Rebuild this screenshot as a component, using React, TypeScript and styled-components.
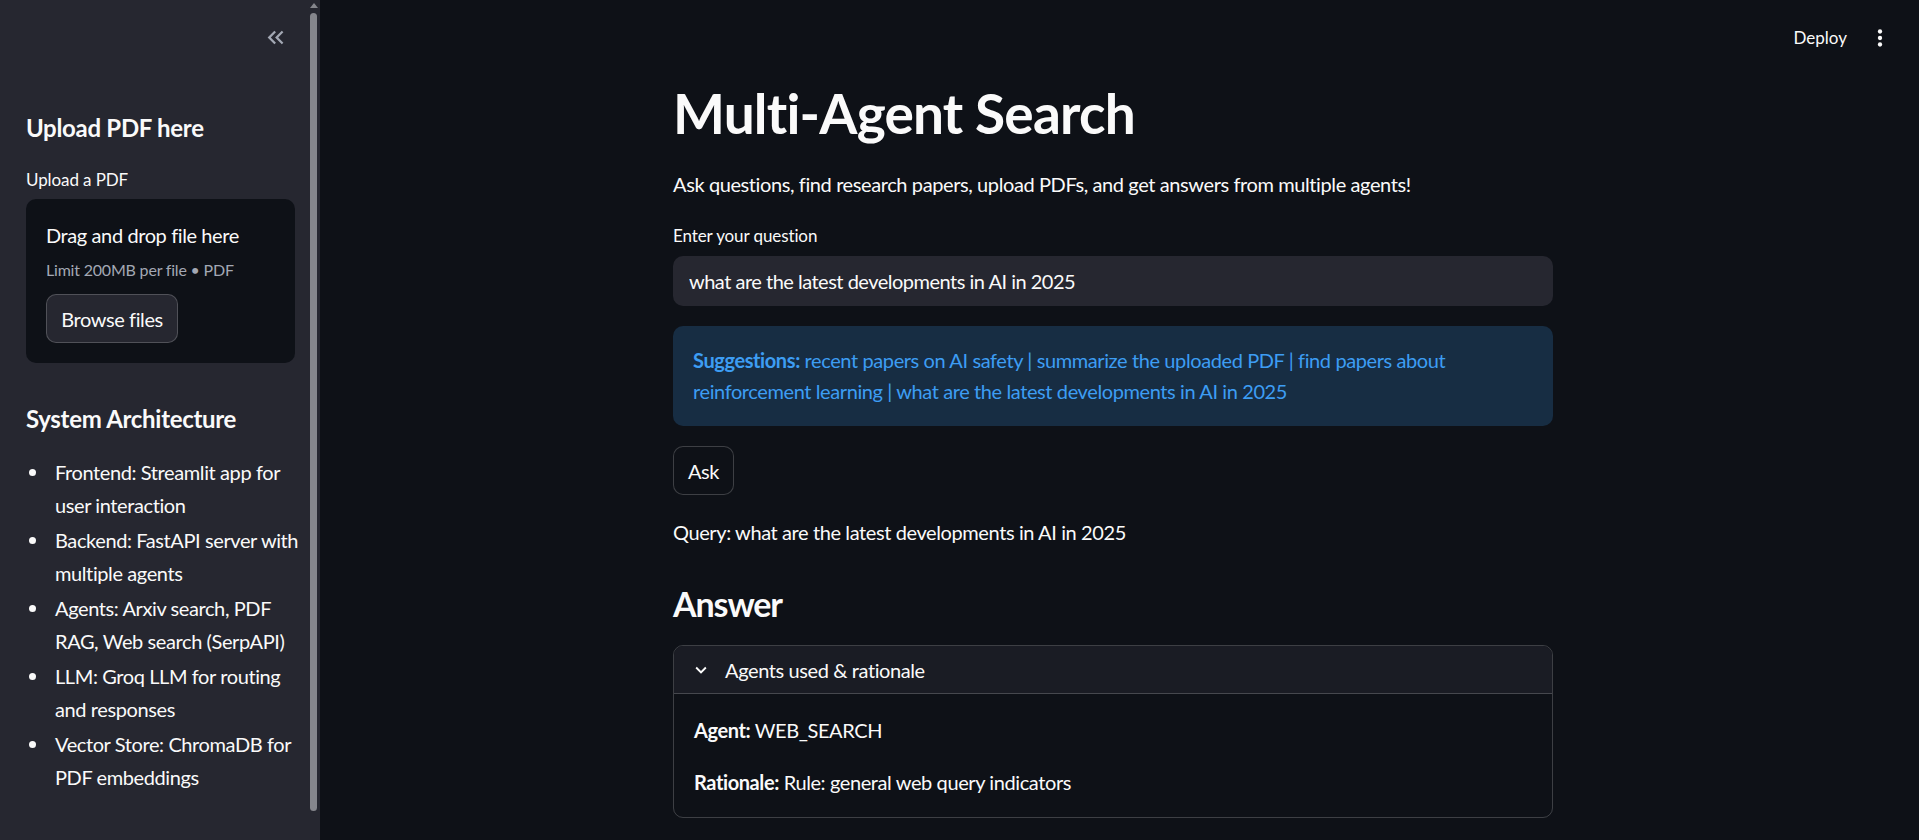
import React from "react";
import styled, { createGlobalStyle } from "styled-components";

const FONT = `Lato, "Noto Sans", "DejaVu Sans", sans-serif`;

const GlobalStyle = createGlobalStyle`
  html, body { margin: 0; padding: 0; }
  body {
    background: #0e1117;
    color: #fafafa;
    font-family: ${FONT};
    font-size: 20px;
    letter-spacing: -0.4px;
    -webkit-font-smoothing: antialiased;
  }
  * { box-sizing: border-box; }
`;

const Shell = styled.div`
  display: flex;
  height: 840px;
  overflow: hidden;
  background: #0e1117;
`;

/* ---------------- Sidebar ---------------- */

const Sidebar = styled.aside`
  position: relative;
  width: 320px;
  flex: 0 0 320px;
  height: 100%;
  background: #262730;
  padding: 0 25px 0 26px;
`;

const SidebarTop = styled.div`
  height: 75px;
  display: flex;
  justify-content: flex-end;
  align-items: center;
  padding-right: 6px;
`;

const IconButton = styled.button<{ $tone?: string }>`
  display: flex;
  align-items: center;
  justify-content: center;
  background: none;
  border: 0;
  padding: 0;
  margin: 0;
  color: ${(p) => p.$tone || "#fafafa"};
  cursor: pointer;
`;

const ScrollTrack = styled.div`
  position: absolute;
  top: 0;
  right: 2px;
  width: 8px;
  height: 100%;
`;

const ScrollArrow = styled.div`
  width: 0;
  height: 0;
  margin: 3px auto 0;
  border-left: 4px solid transparent;
  border-right: 4px solid transparent;
  border-bottom: 5px solid #85868c;
`;

const ScrollThumb = styled.div`
  position: absolute;
  left: 0;
  top: 13px;
  width: 7px;
  height: 798px;
  border-radius: 4px;
  background: #85868c;
`;

const SideHeading = styled.h3<{ $mt: number }>`
  margin: ${(p) => p.$mt}px 0 0;
  font-size: 24px;
  line-height: 30px;
  font-weight: 700;
  letter-spacing: -0.3px;
  color: #fafafa;
`;

const FieldLabel = styled.label<{ $mt: number }>`
  display: block;
  font-size: 17px;
  line-height: 24px;
  letter-spacing: -0.1px;
  color: #fafafa;
  margin-top: ${(p) => p.$mt}px;
`;

const Dropzone = styled.section`
  margin-top: 7px;
  background: #0e1117;
  border-radius: 10px;
  padding: 22px 20px 20px;
  display: flex;
  flex-direction: column;
  align-items: flex-start;
`;

const DropTitle = styled.div`
  font-size: 20px;
  line-height: 28px;
  color: #fafafa;
`;

const DropHint = styled.div`
  margin-top: 9px;
  font-size: 16px;
  line-height: 24px;
  letter-spacing: -0.2px;
  color: #a3a8b4;
`;

const SecondaryButton = styled.button<{ $bg?: string }>`
  font-family: ${FONT};
  font-size: 20px;
  letter-spacing: -0.4px;
  color: #fafafa;
  background: ${(p) => p.$bg || "#262730"};
  border: 1px solid rgba(250, 250, 250, 0.2);
  border-radius: 10px;
  height: 49px;
  padding: 0 15px;
  cursor: pointer;
`;

const BrowseButton = styled(SecondaryButton)`
  margin-top: 12px;
  width: 132px;
  padding: 0;
`;

const List = styled.ul`
  list-style: none;
  margin: 22px -8px 0 0;
  padding: 0;
  display: flex;
  flex-direction: column;
  gap: 2px;
`;

const ListItem = styled.li`
  display: grid;
  grid-template-columns: 29px 1fr;
  font-size: 20px;
  line-height: 33px;
  color: #fafafa;
`;

const Bullet = styled.span`
  height: 33px;
  display: flex;
  align-items: center;
  padding-left: 3px;
  &::before {
    content: "";
    width: 7px;
    height: 7px;
    border-radius: 50%;
    background: #fafafa;
  }
`;

/* ---------------- Main ---------------- */

const Main = styled.main`
  flex: 1;
  height: 100%;
  display: flex;
  flex-direction: column;
`;

const TopBar = styled.header`
  height: 75px;
  flex: 0 0 75px;
  display: flex;
  justify-content: flex-end;
  align-items: center;
  gap: 20px;
  padding-right: 26px;
`;

const DeployButton = styled.button`
  background: none;
  border: 0;
  padding: 0;
  font-family: ${FONT};
  font-size: 17px;
  color: #fafafa;
  cursor: pointer;
`;

const ContentWrap = styled.div`
  padding-right: 13px;
`;

const Content = styled.div`
  max-width: 880px;
  margin: 0 auto;
  display: flex;
  flex-direction: column;
  align-items: stretch;
`;

const Title = styled.h1`
  margin: 5px 0 0;
  font-size: 55px;
  line-height: 66px;
  font-weight: 700;
  letter-spacing: -0.8px;
  color: #fafafa;
`;

const Paragraph = styled.p<{ $mt: number }>`
  margin: ${(p) => p.$mt}px 0 0;
  font-size: 20px;
  line-height: 32px;
  color: #fafafa;
`;

const TextInput = styled.input`
  margin-top: 8px;
  height: 50px;
  width: 100%;
  background: #262730;
  border: 0;
  border-radius: 10px;
  padding: 0 16px;
  font-family: ${FONT};
  font-size: 20px;
  letter-spacing: -0.5px;
  color: #fafafa;
  outline: none;
`;

const InfoBox = styled.div`
  margin-top: 20px;
  background: #172d43;
  border-radius: 10px;
  padding: 19px 20px 19px 20px;
  font-size: 20px;
  line-height: 31px;
  color: #3d9df3;
  strong { font-weight: 700; }
`;

const AskButton = styled(SecondaryButton)`
  margin-top: 20px;
  align-self: flex-start;
  width: 61px;
  padding: 0;
`;

const SubHeading = styled.h3`
  margin: 35px 0 0;
  font-size: 34px;
  line-height: 42px;
  font-weight: 700;
  letter-spacing: -1.1px;
  color: #fafafa;
`;

const Expander = styled.details`
  margin-top: 20px;
  border: 1px solid rgba(250, 250, 250, 0.2);
  border-radius: 10px;
  overflow: hidden;
`;

const ExpanderSummary = styled.summary`
  list-style: none;
  height: 48px;
  display: flex;
  align-items: center;
  gap: 13px;
  padding-left: 16px;
  background: #1a1c24;
  border-bottom: 1px solid rgba(250, 250, 250, 0.2);
  font-size: 20px;
  color: #fafafa;
  cursor: pointer;
  &::-webkit-details-marker { display: none; }
`;

const ExpanderBody = styled.div`
  padding: 20px 20px 19px;
  display: flex;
  flex-direction: column;
  gap: 20px;
  font-size: 20px;
  line-height: 32px;
  strong { font-weight: 700; }
`;

const DoubleChevronLeft = () => (
  <svg width="27" height="27" viewBox="0 0 24 24" fill="currentColor">
    <path d="M17.59 18L19 16.59 14.42 12 19 7.41 17.59 6l-6 6z" />
    <path d="M11 18l1.41-1.41L7.83 12l4.58-4.59L11 6l-6 6z" />
  </svg>
);

const MoreVert = () => (
  <svg width="26" height="26" viewBox="0 0 24 24" fill="currentColor">
    <circle cx="12" cy="6" r="2" />
    <circle cx="12" cy="12" r="2" />
    <circle cx="12" cy="18" r="2" />
  </svg>
);

const ExpandMore = () => (
  <svg width="22" height="22" viewBox="0 0 24 24" fill="currentColor">
    <path d="M16.59 8.59L12 13.17 7.41 8.59 6 10l6 6 6-6z" />
  </svg>
);

const architecture = [
  "Frontend: Streamlit app for user interaction",
  "Backend: FastAPI server with multiple agents",
  "Agents: Arxiv search, PDF RAG, Web search (SerpAPI)",
  "LLM: Groq LLM for routing and responses",
  "Vector Store: ChromaDB for PDF embeddings",
];

export default function App() {
  return (
    <>
      <GlobalStyle />
      <Shell>
        <Sidebar>
          <SidebarTop>
            <IconButton $tone="#a3a8b4" aria-label="Collapse sidebar">
              <DoubleChevronLeft />
            </IconButton>
          </SidebarTop>
          <SideHeading $mt={38}>Upload PDF here</SideHeading>
          <FieldLabel $mt={25}>Upload a PDF</FieldLabel>
          <Dropzone>
            <DropTitle>Drag and drop file here</DropTitle>
            <DropHint>Limit 200MB per file • PDF</DropHint>
            <BrowseButton>Browse files</BrowseButton>
          </Dropzone>
          <SideHeading $mt={41}>System Architecture</SideHeading>
          <List>
            {architecture.map((t) => (
              <ListItem key={t}>
                <Bullet />
                <span>{t}</span>
              </ListItem>
            ))}
          </List>
          <ScrollTrack>
            <ScrollArrow />
            <ScrollThumb />
          </ScrollTrack>
        </Sidebar>
        <Main>
          <TopBar>
            <DeployButton>Deploy</DeployButton>
            <IconButton aria-label="Main menu">
              <MoreVert />
            </IconButton>
          </TopBar>
          <ContentWrap>
            <Content>
              <Title>Multi-Agent Search</Title>
              <Paragraph $mt={22}>
                Ask questions, find research papers, upload PDFs, and get answers from multiple agents!
              </Paragraph>
              <FieldLabel $mt={24}>Enter your question</FieldLabel>
              <TextInput defaultValue="what are the latest developments in AI in 2025" />
              <InfoBox>
                <strong>Suggestions:</strong> recent papers on AI safety | summarize the uploaded PDF | find
                papers about reinforcement learning | what are the latest developments in AI in 2025
              </InfoBox>
              <AskButton $bg="#0e1117">Ask</AskButton>
              <Paragraph $mt={21}>Query: what are the latest developments in AI in 2025</Paragraph>
              <SubHeading>Answer</SubHeading>
              <Expander open>
                <ExpanderSummary>
                  <ExpandMore />
                  Agents used &amp; rationale
                </ExpanderSummary>
                <ExpanderBody>
                  <span>
                    <strong>Agent:</strong> WEB_SEARCH
                  </span>
                  <span>
                    <strong>Rationale:</strong> Rule: general web query indicators
                  </span>
                </ExpanderBody>
              </Expander>
            </Content>
          </ContentWrap>
        </Main>
      </Shell>
    </>
  );
}
